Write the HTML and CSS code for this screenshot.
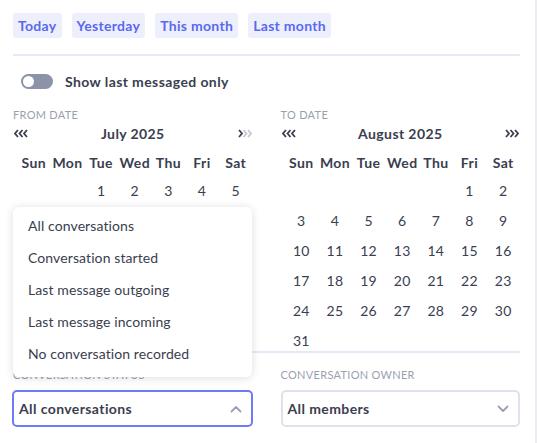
FILE: index.html
```html
<!DOCTYPE html>
<html lang="en">
<head>
    <meta charset="UTF-8">
    <meta name="viewport" content="width=device-width, initial-scale=1.0">
    <title>Date filter</title>
    <link rel="stylesheet" href="styles.css">
</head>
<body>
    <div class="panel">
        <div class="quick-row">
            <button class="quick">Today</button>
            <button class="quick">Yesterday</button>
            <button class="quick">This month</button>
            <button class="quick">Last month</button>
        </div>
        <div class="divider"></div>

        <div class="toggle-row">
            <span class="toggle"><span class="knob"></span></span>
            <span class="toggle-label">Show last messaged only</span>
        </div>

        <div class="calendars">
            <div class="calendar">
                <div class="field-label">From date</div>
                <div class="cal-nav">
                    <svg class="arrows" width="15" height="9" viewBox="0 0 15 9"><path d="M4 1 L1 4.5 L4 8 M8.5 1 L5.5 4.5 L8.5 8 M13 1 L10 4.5 L13 8" fill="none" stroke="#3a3e50" stroke-width="1.8"/></svg>
                    <span class="month">July 2025</span>
                    <svg class="arrows" width="15" height="9" viewBox="0 0 15 9"><path d="M2 1 L5 4.5 L2 8" fill="none" stroke="#3a3e50" stroke-width="1.8"/><path d="M6.5 1 L9.5 4.5 L6.5 8 M11 1 L14 4.5 L11 8" fill="none" stroke="#c5c8d3" stroke-width="1.8"/></svg>
                </div>
                <div class="cal-grid week">
                    <span>Sun</span><span>Mon</span><span>Tue</span><span>Wed</span><span>Thu</span><span>Fri</span><span>Sat</span>
                </div>
                <div class="cal-grid days">
                    <span></span><span></span><span>1</span><span>2</span><span>3</span><span>4</span><span>5</span>
                </div>
            </div>
            <div class="calendar">
                <div class="field-label">To date</div>
                <div class="cal-nav">
                    <svg class="arrows" width="15" height="9" viewBox="0 0 15 9"><path d="M4 1 L1 4.5 L4 8 M8.5 1 L5.5 4.5 L8.5 8 M13 1 L10 4.5 L13 8" fill="none" stroke="#3a3e50" stroke-width="1.8"/></svg>
                    <span class="month">August 2025</span>
                    <svg class="arrows" width="15" height="9" viewBox="0 0 15 9"><path d="M2 1 L5 4.5 L2 8 M6.5 1 L9.5 4.5 L6.5 8 M11 1 L14 4.5 L11 8" fill="none" stroke="#3a3e50" stroke-width="1.8"/></svg>
                </div>
                <div class="cal-grid week">
                    <span>Sun</span><span>Mon</span><span>Tue</span><span>Wed</span><span>Thu</span><span>Fri</span><span>Sat</span>
                </div>
                <div class="cal-grid days">
                    <span></span><span></span><span></span><span></span><span></span><span>1</span><span>2</span>
                    <span>3</span><span>4</span><span>5</span><span>6</span><span>7</span><span>8</span><span>9</span>
                    <span>10</span><span>11</span><span>12</span><span>13</span><span>14</span><span>15</span><span>16</span>
                    <span>17</span><span>18</span><span>19</span><span>20</span><span>21</span><span>22</span><span>23</span>
                    <span>24</span><span>25</span><span>26</span><span>27</span><span>28</span><span>29</span><span>30</span>
                    <span>31</span>
                </div>
            </div>
        </div>
        <div class="divider bottom"></div>

        <div class="selects">
            <div class="field">
                <div class="field-label">Conversation status</div>
                <div class="select focused">
                    <span>All conversations</span>
                    <svg width="12" height="8" viewBox="0 0 12 8"><path d="M1.5 6.5 L6 2 L10.5 6.5" fill="none" stroke="#9ba1b1" stroke-width="1.8" stroke-linecap="round" stroke-linejoin="round"/></svg>
                </div>
                <!-- Menu -->
                <ul class="menu">
                    <li>All conversations</li>
                    <li>Conversation started</li>
                    <li>Last message outgoing</li>
                    <li>Last message incoming</li>
                    <li>No conversation recorded</li>
                </ul>
            </div>
            <div class="field">
                <div class="field-label">Conversation owner</div>
                <div class="select">
                    <span>All members</span>
                    <svg width="12" height="8" viewBox="0 0 12 8"><path d="M1.5 1.5 L6 6 L10.5 1.5" fill="none" stroke="#9ba1b1" stroke-width="1.8" stroke-linecap="round" stroke-linejoin="round"/></svg>
                </div>
            </div>
        </div>
    </div>
</body>
</html>
```

FILE: styles.css
```css
body {
    margin: 0;
    font-family: Lato, "Open Sans", sans-serif;
    font-size: 14px;
    color: #3a3e50;
    background-color: #fff;
}
.panel {
    width: 507px;
    height: 443px;
    padding: 13px 15px 0 13px;
    border-right: 2px solid #ededf1;
    box-sizing: content-box;
}
.quick-row {
    display: flex;
    gap: 10px;
    height: 25px;
}
.quick {
    font-family: inherit;
    font-size: 14px;
    font-weight: 700;
    letter-spacing: 0.3px;
    color: #5b68ef;
    background-color: #edf0fc;
    border: none;
    border-radius: 3px;
    padding: 0 5px;
    height: 25px;
}
.divider {
    height: 2px;
    background-color: #e6e9f5;
    margin-top: 16px;
}
.divider.bottom {
    margin-top: -1px;
}
.toggle-row {
    display: flex;
    align-items: center;
    gap: 12px;
    margin-top: 18px;
    padding-left: 8px;
    height: 15px;
}
.toggle {
    width: 32px;
    height: 15px;
    border-radius: 8px;
    background-color: #8c93a8;
    display: flex;
    align-items: center;
    padding-left: 2px;
    box-sizing: border-box;
}
.knob {
    width: 11px;
    height: 11px;
    border-radius: 50%;
    background-color: #fff;
}
.toggle-label {
    font-weight: 700;
    letter-spacing: 0.4px;
}
.calendars {
    display: flex;
    gap: 28px;
    margin-top: 19px;
}
.calendar {
    width: 240px;
    height: 244px;
}
.field-label {
    font-size: 11px;
    line-height: 14px;
    text-transform: uppercase;
    color: #9a9fb0;
    letter-spacing: 0.3px;
}
.cal-nav {
    display: flex;
    justify-content: space-between;
    align-items: center;
    height: 20px;
    margin-top: 1px;
    padding: 0 1px;
}
.month {
    font-weight: 700;
    letter-spacing: 0.4px;
}
.arrows {
    display: block;
}
.cal-grid {
    display: grid;
    grid-template-columns: repeat(7, 1fr);
    padding-left: 4px;
    text-align: center;
}
.week {
    margin-top: 10px;
    height: 20px;
    line-height: 20px;
    font-weight: 700;
    letter-spacing: 0.4px;
}
.days {
    margin-top: 8px;
    grid-auto-rows: 20px;
    row-gap: 10px;
    line-height: 20px;
    letter-spacing: 0.3px;
}
.selects {
    display: flex;
    gap: 28px;
    margin-top: 15px;
}
.field {
    position: relative;
    width: 241px;
}
.select {
    margin-top: 8px;
    height: 37px;
    box-sizing: border-box;
    border: 2px solid #dfe2eb;
    border-radius: 5px;
    display: flex;
    align-items: center;
    justify-content: space-between;
    padding: 0 9px 0 5px;
    font-weight: 700;
    letter-spacing: 0.4px;
}
.select.focused {
    border-color: #6d7cf4;
    margin-left: -1px;
}
.menu {
    position: absolute;
    left: 0;
    bottom: 50px;
    width: 239px;
    margin: 0;
    padding: 3px 0 7px;
    list-style: none;
    background-color: #fff;
    border-radius: 6px;
    box-shadow: 0 1px 8px rgba(40, 45, 80, 0.16);
}
.menu li {
    height: 32px;
    line-height: 32px;
    padding-left: 15px;
    letter-spacing: 0.1px;
}
```
